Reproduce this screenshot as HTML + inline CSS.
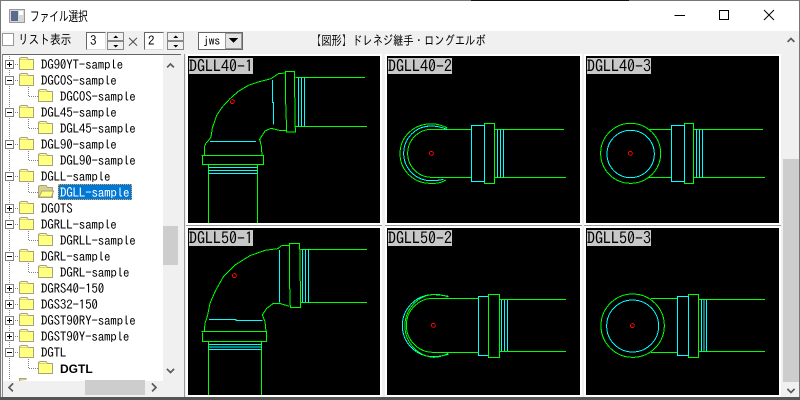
<!DOCTYPE html>
<html lang="ja"><head><meta charset="utf-8"><title>ファイル選択</title>
<style>
html,body{margin:0;padding:0}
body{width:800px;height:400px;position:relative;overflow:hidden;background:#f0f0f0;font-family:"IPAGothic","Liberation Sans","Noto Sans CJK JP",sans-serif;color:#000}
div{position:absolute;box-sizing:border-box}
.t{font-size:13px;line-height:16px;white-space:nowrap;height:16px;letter-spacing:-.2px;margin-top:1px}
.a{left:41px}.b{left:60px}
.p{background:#000}
.fr{border:2px solid #fff;box-shadow:0 1px 0 #999}
.l{background:#c8c8c8;font-size:16px;line-height:16px;height:16px;width:64px;white-space:nowrap;color:#000}
.sq{transform-origin:0 50%;white-space:nowrap}
.sp{background:#fff;border:1px solid #666;border-right-color:#ddd;border-bottom-color:#ddd;font-size:13px;line-height:15px;padding-left:3px;height:18px;width:20px;top:32px}
.bt{background:#f0f0f0;border:1px solid #888;width:17px;height:9px}
.d g{shape-rendering:crispEdges}
</style></head><body>
<div style="left:0;top:0;width:800px;height:31px;background:#fff"></div>
<div style="left:0;top:0;width:800px;height:1px;background:#777"></div>
<div style="left:471px;top:0;width:158px;height:1px;background:#111"></div>
<div style="left:0;top:0;width:1px;height:400px;background:#777"></div>
<div style="left:799px;top:0;width:1px;height:400px;background:#777"></div>
<div class="sq" style="left:30px;top:7px;font-size:13px;line-height:18px;font-family:'Noto Sans CJK JP',sans-serif;transform:scaleX(.74)">ファイル選択</div>
<div class="sq" style="left:18px;top:31px;font-size:13px;line-height:17px;transform:scaleX(.82)">リスト表示</div>
<div style="left:2px;top:33px;width:12px;height:13px;background:#fff;border:1px solid #999"></div>
<div class="sp" style="left:86px">3</div>
<div class="bt" style="left:107px;top:32px"></div><div class="bt" style="left:107px;top:41px"></div>
<div style="left:126px;top:32px;font-size:14px;line-height:20px;color:#444">×</div>
<div class="sp" style="left:144px">2</div>
<div class="bt" style="left:167px;top:32px"></div><div class="bt" style="left:167px;top:41px"></div>
<div style="left:198px;top:32px;width:45px;height:18px;background:#fff;border:1px solid #666;font-size:12px;line-height:16px;padding-left:4px;letter-spacing:-.4px">jws</div>
<div style="left:225px;top:33px;width:17px;height:16px;background:#e4e4e4;border:1px solid #999"></div>
<div class="sq" style="left:311px;top:33px;font-size:13px;line-height:16px;transform:scaleX(.79)">【図形】ドレネジ継手・ロングエルボ</div>

<!-- tree -->
<div style="left:2px;top:54px;width:179px;height:343px;background:#f0f0f0;border-top:1px solid #666;border-left:1px solid #888"></div>
<div style="left:3px;top:55px;width:160px;height:326px;background:#fff"></div>
<div style="left:163px;top:226px;width:15px;height:39px;background:#cdcdcd"></div>
<div style="left:85px;top:380px;width:60px;height:15px;background:#cdcdcd"></div>
<div style="left:184px;top:54px;width:1px;height:343px;background:#999"></div>
<div style="left:58px;top:184px;width:74px;height:16px;background:#0078d7;border:1px dotted #f5a030"></div>

<div class="t a" style="top:56px">DG90YT-sample</div>
<div class="t a" style="top:72px">DGCOS-sample</div>
<div class="t b" style="top:88px">DGCOS-sample</div>
<div class="t a" style="top:104px">DGL45-sample</div>
<div class="t b" style="top:120px">DGL45-sample</div>
<div class="t a" style="top:136px">DGL90-sample</div>
<div class="t b" style="top:152px">DGL90-sample</div>
<div class="t a" style="top:168px">DGLL-sample</div>
<div class="t b" style="top:184px;color:#fff">DGLL-sample</div>
<div class="t a" style="top:200px">DGOTS</div>
<div class="t a" style="top:216px">DGRLL-sample</div>
<div class="t b" style="top:232px">DGRLL-sample</div>
<div class="t a" style="top:248px">DGRL-sample</div>
<div class="t b" style="top:264px">DGRL-sample</div>
<div class="t a" style="top:280px">DGRS40-150</div>
<div class="t a" style="top:296px">DGS32-150</div>
<div class="t a" style="top:312px">DGST90RY-sample</div>
<div class="t a" style="top:328px">DGST90Y-sample</div>
<div class="t a" style="top:344px">DGTL</div>
<div class="t b" style="top:360px;font-weight:bold;font-family:'Liberation Sans',sans-serif;font-size:12px;letter-spacing:0">DGTL</div>

<!-- drawing panels -->
<div class="fr" style="left:186px;top:54px;width:196px;height:171px"></div>
<div class="fr" style="left:385px;top:54px;width:197px;height:171px"></div>
<div class="fr" style="left:584px;top:54px;width:197px;height:171px"></div>
<div class="fr" style="left:186px;top:226px;width:196px;height:171px"></div>
<div class="fr" style="left:385px;top:226px;width:197px;height:171px"></div>
<div class="fr" style="left:584px;top:226px;width:197px;height:171px"></div>
<div class="p" style="left:188px;top:56px;width:192px;height:167px"></div>
<div class="p" style="left:387px;top:56px;width:193px;height:167px"></div>
<div class="p" style="left:586px;top:56px;width:193px;height:167px"></div>
<div class="p" style="left:188px;top:228px;width:192px;height:167px"></div>
<div class="p" style="left:387px;top:228px;width:193px;height:167px"></div>
<div class="p" style="left:586px;top:228px;width:193px;height:167px"></div>
<div class="l" style="left:189px;top:58px">DGLL40-1</div>
<div class="l" style="left:388px;top:58px">DGLL40-2</div>
<div class="l" style="left:587px;top:58px">DGLL40-3</div>
<div class="l" style="left:189px;top:230px">DGLL50-1</div>
<div class="l" style="left:388px;top:230px">DGLL50-2</div>
<div class="l" style="left:587px;top:230px">DGLL50-3</div>

<!-- right scrollbar -->
<div style="left:783px;top:159px;width:16px;height:223px;background:#cdcdcd"></div>
<div style="left:0;top:397px;width:800px;height:3px;background:#555"></div>

<svg class="d" width="800" height="400" viewBox="0 0 800 400" style="position:absolute;left:0;top:0" fill="none">
<defs>
<g id="f"><path d="M0.5 3V1.5L2 .5H8L9.5 2.5H14.5V12.5H.5Z" fill="#ffff80" stroke="#a8a478"/><path d="M1 2H9V3H1Z" fill="#d8d090"/></g>
<g id="o"><path d="M0.5 3V1.5L2 .5H8L9.5 2.5H14.5V12.5H.5Z" fill="#d8d090" stroke="#a8a478"/><path d="M1 12L4 6H15.5L13.5 12Z" fill="#ffff80" stroke="#a8a478"/></g>
<g id="pl"><rect x=".5" y=".5" width="8" height="8" fill="#fff" stroke="#808080"/><path d="M2 4.500H7M4.500 2V7" stroke="#000"/></g>
<g id="mi"><rect x=".5" y=".5" width="8" height="8" fill="#fff" stroke="#808080"/><path d="M2 4.500H7" stroke="#000"/></g>
</defs>
<!-- title icon -->
<rect x="9.500" y="9.500" width="15" height="13" fill="#d8d8d8" stroke="#999"/><rect x="11" y="11" width="7" height="10" fill="#5a6a90"/><rect x="19" y="11" width="4" height="4" fill="#fff"/>
<!-- window buttons -->
<path d="M674.500 15.500H685" stroke="#000"/>
<rect x="719.500" y="10.500" width="9" height="9" stroke="#000"/>
<path d="M764 10L774 20M774 10L764 20" stroke="#000"/>
<!-- spin & select arrows -->
<g fill="#000"><path d="M113 38h5l-2.500-2.500zM113 45h5l-2.500 2.500zM173 38h5l-2.500-2.500zM173 45h5l-2.500 2.500zM229 38h9l-4.500 5z"/></g>
<!-- tree dotted -->
<g stroke="#808080" stroke-dasharray="1 1">
<path d="M9.500 56V380"/>
<path d="M13 64.500H19M13 80.500H19M13 112.500H19M13 144.500H19M13 176.500H19M13 208.500H19M13 224.500H19M13 256.500H19M13 288.500H19M13 304.500H19M13 320.500H19M13 336.500H19M13 352.500H19"/>
<path d="M28.500 87V96.500H38M28.500 119V128.500H38M28.500 151V160.500H38M28.500 183V192.500H38M28.500 231V240.500H38M28.500 263V272.500H38M28.500 359V368.500H38"/>
</g>
<use href="#pl" x="5" y="60"/><use href="#mi" x="5" y="76"/><use href="#mi" x="5" y="108"/><use href="#mi" x="5" y="140"/><use href="#mi" x="5" y="172"/><use href="#pl" x="5" y="204"/><use href="#mi" x="5" y="220"/><use href="#mi" x="5" y="252"/><use href="#pl" x="5" y="284"/><use href="#pl" x="5" y="300"/><use href="#pl" x="5" y="316"/><use href="#pl" x="5" y="332"/><use href="#mi" x="5" y="348"/>
<use href="#f" x="19" y="57"/><use href="#f" x="19" y="73"/><use href="#f" x="38" y="89"/><use href="#f" x="19" y="105"/><use href="#f" x="38" y="121"/><use href="#f" x="19" y="137"/><use href="#f" x="38" y="153"/><use href="#f" x="19" y="169"/><use href="#o" x="38" y="185"/><use href="#f" x="19" y="201"/><use href="#f" x="19" y="217"/><use href="#f" x="38" y="233"/><use href="#f" x="19" y="249"/><use href="#f" x="38" y="265"/><use href="#f" x="19" y="281"/><use href="#f" x="19" y="297"/><use href="#f" x="19" y="313"/><use href="#f" x="19" y="329"/><use href="#f" x="19" y="345"/><use href="#f" x="38" y="361"/>
<path d="M19.500 381V378.500H26V380" fill="#d8d090" stroke="#a8a478"/>
<!-- chevrons -->
<g stroke="#606060" stroke-width="2"><path d="M167 67.500L170.500 64L174 67.500M167 369L170.500 372.500L174 369M13 383.500L9 387.500L13 391.500M152 383.500L156 387.500L152 391.500M787.500 42L791 38.500L794.500 42M787.500 389L791 392.500L794.500 389"/></g>

<!-- P1 -->
<g transform="translate(185 52) scale(.33333)" stroke-width="3">
<g stroke="#00ff00">
<path d="M58 310V285L62 275L73 262L78 255L82 228L95 190L112 165L135 140L160 118L190 100L220 90L258 80L280 65L300 63"/>
<path d="M302 58H328L331 240H305L302 150Z"/>
<path d="M303 236L283 235L258 229L240 237L224 262L229 283L231 310"/>
<path d="M49 310H236V337H53V312"/>
<path d="M70 337V513M217 337V513M331 76H540M331 223H546"/>
</g>
<g stroke="#00ffff"><path d="M70 346H217M70 355H217M70 364H217M75 268H213M262 84V152H265V218M340 76V223M349 76V223M358 76V223"/></g>
<g stroke="#ff0000"><circle cx="142" cy="149" r="6"/></g>
</g>
<!-- P2 -->
<g transform="translate(385 52) scale(.33333)" stroke-width="3">
<g stroke="#00ff00"><path d="M140 232H259M140 376H259M329 232H537M329 376H543"/><path d="M140 232A72 72 0 0 0 140 376"/><path d="M187 228Q160 214 135 216A89 88 0 0 0 135 394Q165 396 182 384"/><rect x="298" y="214" width="31" height="180"/></g>
<g stroke="#00ffff"><path d="M187 232Q160 222 138 222A82 82 0 0 0 138 386Q160 386 175 382"/><rect x="259" y="220" width="39" height="168"/><path d="M337 232V376M346 232V376M355 232V376"/></g>
<g stroke="#ff0000"><circle cx="139" cy="304" r="6"/></g>
</g>
<!-- P3 -->
<g transform="translate(580 52) scale(.33333)" stroke-width="3">
<g stroke="#00ff00"><circle cx="152" cy="304" r="90"/><path d="M207 232H274M207 376H274M341 232H549M341 376H555"/><rect x="313" y="214" width="28" height="180"/></g>
<g stroke="#00ffff"><circle cx="152" cy="306" r="71"/><rect x="274" y="220" width="39" height="168"/><path d="M349 232V376M358 232V376M367 232V376"/></g>
<g stroke="#ff0000"><circle cx="151" cy="304" r="6"/></g>
</g>
<!-- P4 -->
<g transform="translate(185 225) scale(.33333)" stroke-width="3">
<g stroke="#00ff00">
<path d="M58 319L60 295L68 270L75 235L90 200L115 155L150 120L195 92L240 76L278 71L290 62L312 62"/>
<path d="M313 55H344L347 247H316L313 150Z"/>
<path d="M314 244L283 235L265 235L245 250L232 270L240 290L243 319"/>
<path d="M50 319H245V349H53V322"/>
<path d="M70 349V510M229 349V510M347 73H546M347 232H546"/>
</g>
<g stroke="#00ffff"><path d="M70 358H229M70 366H229M70 373H229M72 283H153V286H232M283 75V233M353 73V232M362 73V232M371 73V232"/></g>
<g stroke="#ff0000"><circle cx="148" cy="152" r="6"/></g>
</g>
<!-- P5 -->
<g transform="translate(385 225) scale(.33333)" stroke-width="3">
<g stroke="#00ffff"><path d="M190 214Q165 209 145 209A93 93 0 0 0 145 395Q165 395 190 388"/><rect x="280" y="214" width="30" height="177"/><path d="M350 223V379M359 223V379M368 223V379"/></g>
<g stroke="#00ff00"><path d="M145 220H280M145 382H280M344 223H543M344 379H543"/><path d="M145 220A81 81 0 0 0 145 382"/><path d="M190 216Q165 207 145 208A95 95 0 0 0 145 397Q170 397 190 384"/><rect x="310" y="208" width="34" height="189"/></g>
<g stroke="#ff0000"><circle cx="145" cy="301" r="6"/></g>
</g>
<!-- P6 -->
<g transform="translate(580 225) scale(.33333)" stroke-width="3">
<g stroke="#00ff00"><circle cx="158" cy="302" r="95"/><path d="M213 220H292M213 382H292M356 223H555M356 379H555"/><rect x="325" y="208" width="31" height="189"/></g>
<g stroke="#00ffff"><circle cx="158" cy="303" r="78"/><rect x="292" y="214" width="33" height="177"/><path d="M364 223V379M372 223V379M380 223V379"/></g>
<g stroke="#ff0000"><circle cx="157" cy="302" r="6"/></g>
</g>
</svg>
</body></html>
